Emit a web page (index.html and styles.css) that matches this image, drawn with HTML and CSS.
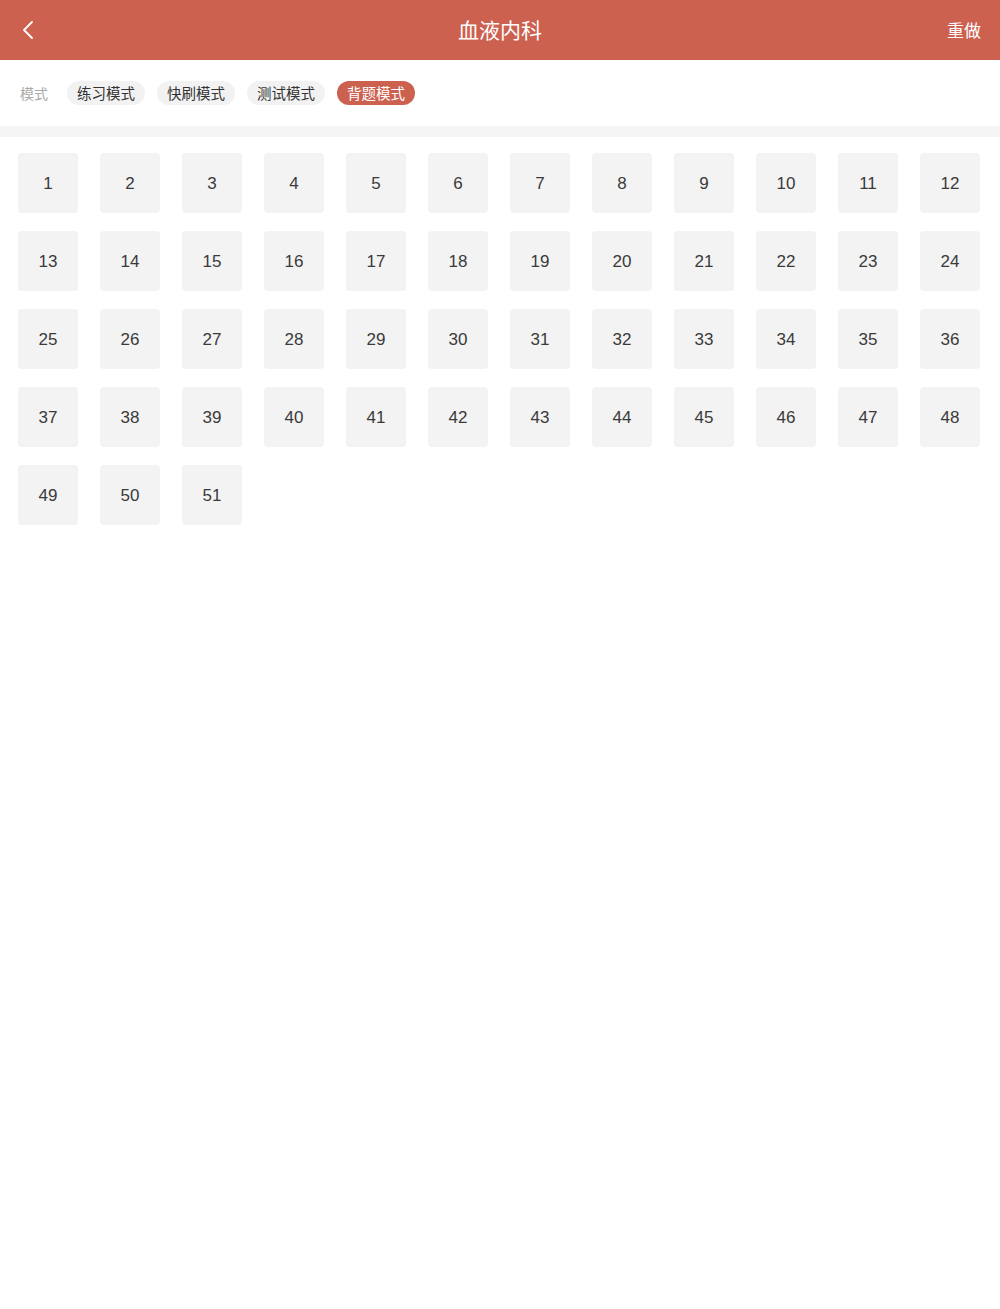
FILE: index.html
```html
<!DOCTYPE html>
<html lang="zh">
<head>
<meta charset="utf-8">
<title>血液内科</title>
<link rel="stylesheet" href="styles.css">
</head>
<body>
<header class="topbar">
  <span class="back">
    <svg width="14" height="20" viewBox="0 0 14 20"><path d="M11 2 L3 10 L11 18" fill="none" stroke="#fff" stroke-width="1.8" stroke-linecap="round" stroke-linejoin="round"/></svg>
  </span>
  <h1 class="title">血液内科</h1>
  <span class="redo">重做</span>
</header>
<nav class="modes">
  <span class="modes-label">模式</span>
  <span class="chip">练习模式</span>
  <span class="chip">快刷模式</span>
  <span class="chip">测试模式</span>
  <span class="chip chip-active">背题模式</span>
</nav>
<div class="divider"></div>
<main class="grid">
  <div class="cell">1</div><div class="cell">2</div><div class="cell">3</div><div class="cell">4</div><div class="cell">5</div><div class="cell">6</div><div class="cell">7</div><div class="cell">8</div><div class="cell">9</div><div class="cell">10</div><div class="cell">11</div><div class="cell">12</div>
  <div class="cell">13</div><div class="cell">14</div><div class="cell">15</div><div class="cell">16</div><div class="cell">17</div><div class="cell">18</div><div class="cell">19</div><div class="cell">20</div><div class="cell">21</div><div class="cell">22</div><div class="cell">23</div><div class="cell">24</div>
  <div class="cell">25</div><div class="cell">26</div><div class="cell">27</div><div class="cell">28</div><div class="cell">29</div><div class="cell">30</div><div class="cell">31</div><div class="cell">32</div><div class="cell">33</div><div class="cell">34</div><div class="cell">35</div><div class="cell">36</div>
  <div class="cell">37</div><div class="cell">38</div><div class="cell">39</div><div class="cell">40</div><div class="cell">41</div><div class="cell">42</div><div class="cell">43</div><div class="cell">44</div><div class="cell">45</div><div class="cell">46</div><div class="cell">47</div><div class="cell">48</div>
  <div class="cell">49</div><div class="cell">50</div><div class="cell">51</div>
</main>
</body>
</html>
```
FILE: styles.css
```css
* { box-sizing: border-box; }
html, body { margin: 0; padding: 0; background: #fff; }
body {
  font-family: "Liberation Sans", "Noto Sans CJK SC", sans-serif;
  color: #333;
}
.topbar {
  height: 60px;
  background: #cd6150;
  display: flex;
  align-items: center;
  justify-content: space-between;
  padding: 0 19px 0 21px;
  position: relative;
}
.back { display: flex; align-items: center; width: 14px; height: 20px; margin-top: 0; }
.title {
  position: absolute;
  left: 0; right: 0;
  top: 0;
  margin: 0;
  line-height: 58px;
  text-align: center;
  font-size: 21px;
  font-weight: normal;
  color: #fff;
  font-family: "Noto Sans CJK SC", sans-serif;
  pointer-events: none;
}
.redo {
  font-size: 17px;
  color: #fff;
  font-family: "Noto Sans CJK SC", sans-serif;
  margin-top: -2px;
}
.modes {
  height: 66px;
  display: flex;
  align-items: center;
  gap: 12px;
  padding: 0 20px;
  font-family: "Noto Sans CJK SC", sans-serif;
  font-size: 14px;
}
.modes-label { color: #aaa; margin-right: 7px; }
.chip {
  width: 78px;
  height: 24px;
  line-height: 23px;
  text-align: center;
  border-radius: 12px;
  background: #f2f2f2;
  color: #333;
  font-size: 14.5px;
}
.chip-active { background: #cd6150; color: #fff; }
.divider { height: 11px; background: #f5f5f5; }
.grid {
  display: grid;
  grid-template-columns: repeat(12, 60px);
  column-gap: 22px;
  row-gap: 18px;
  padding: 16px 18px;
}
.cell {
  width: 60px;
  height: 60px;
  border-radius: 4px;
  background: #f3f3f3;
  display: flex;
  align-items: center;
  justify-content: center;
  padding-top: 2px;
  font-size: 17px;
  color: #3a3a3a;
}
```
